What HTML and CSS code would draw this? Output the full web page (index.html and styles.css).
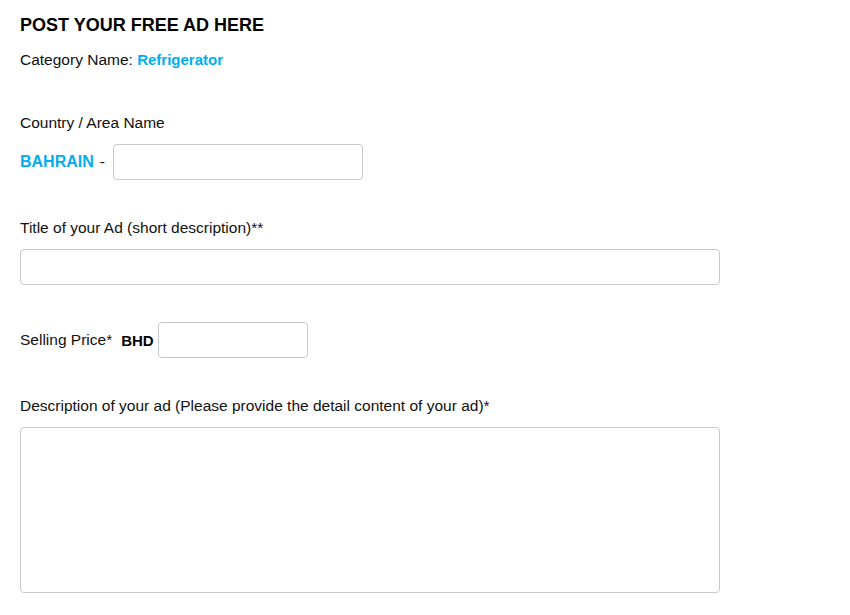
FILE: index.html
```html
<!DOCTYPE html>
<html>
<head>
<meta charset="utf-8">
<link rel="stylesheet" href="styles.css">
</head>
<body>
<div class="form">
  <h1 class="title">POST YOUR FREE AD HERE</h1>
  <div class="line cat">Category Name: <span class="blue">Refrigerator</span></div>
  <div class="line label country">Country / Area Name</div>
  <div class="row area"><span class="blue big">BAHRAIN</span><span class="dash">-</span><input class="field small" type="text"></div>
  <div class="line label tlabel">Title of your Ad (short description)**</div>
  <input class="field wide" type="text">
  <div class="row price"><span class="plabel">Selling Price*</span><span class="cur">BHD</span><input class="field pfield" type="text"></div>
  <div class="line label dlabel">Description of your ad (Please provide the detail content of your ad)*</div>
  <textarea class="field area-box"></textarea>
</div>
</body>
</html>
```
FILE: styles.css
```css
html, body { margin: 0; padding: 0; background: #fff; }
body { font-family: "Liberation Sans", Arial, sans-serif; color: #000; }
.form { padding: 15px 0 0 20px; display: flex; flex-direction: column; align-items: flex-start; }
.title { font-size: 18px; font-weight: bold; line-height: 20px; margin: 0; }
.line { font-size: 15.5px; line-height: 20px; color: #111; }
.cat { margin-top: 15px; }
.blue { color: #00aeef; font-weight: bold; font-size: 15px; }
.blue.big { font-size: 16px; }
.country { margin-top: 43px; }
.row { display: flex; align-items: center; font-size: 15.5px; color: #111; }
.area { margin-top: 11px; }
.dash { margin: 0 8px 0 6px; }
.field { box-sizing: border-box; border: 1px solid #c8c8c8; border-radius: 4px; background: #fff; margin: 0; padding: 4px 8px; font: inherit; }
.small { width: 250px; height: 36px; }
.tlabel { margin-top: 38px; }
.wide { width: 700px; height: 36px; margin-top: 11px; }
.price { margin-top: 37px; }
.cur { font-weight: bold; font-size: 15px; color: #000; margin: 0 4px 0 9px; }
.pfield { width: 150px; height: 36px; }
.dlabel { margin-top: 38px; }
.area-box { width: 700px; height: 166px; margin-top: 11px; resize: none; display: block; }
```
